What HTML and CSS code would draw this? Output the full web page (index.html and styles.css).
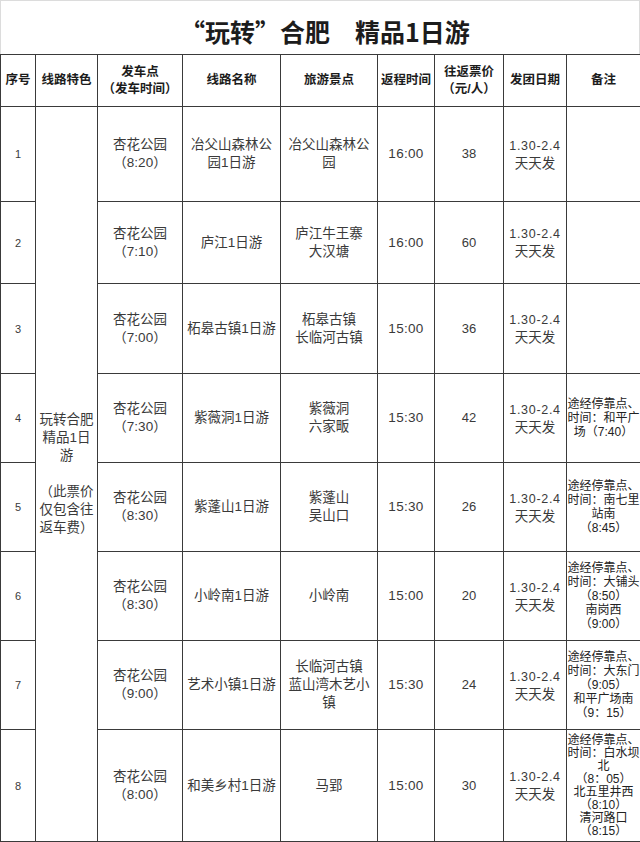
FILE: index.html
```html
<!DOCTYPE html>
<html lang="zh-CN">
<head>
<meta charset="utf-8">
<title>“玩转”合肥 精品1日游</title>
<link rel="stylesheet" href="styles.css">
</head>
<body>
<div class="page">
  <div class="title">“玩转”合肥　精品1日游</div>
  <table class="sheet">
    <colgroup>
      <col class="c-no"><col class="c-feat"><col class="c-dep"><col class="c-name"><col class="c-spot">
      <col class="c-ret"><col class="c-price"><col class="c-date"><col class="c-note">
    </colgroup>
    <thead>
      <tr class="h-head">
        <th>序号</th>
        <th>线路特色</th>
        <th>发车点<br>（发车时间）</th>
        <th>线路名称</th>
        <th>旅游景点</th>
        <th>返程时间</th>
        <th>往返票价<br>（元/人）</th>
        <th>发团日期</th>
        <th>备注</th>
      </tr>
    </thead>
    <tbody>
      <tr class="h95">
        <td class="no">1</td>
        <td class="feat" rowspan="8">玩转合肥<br>精品1日<br>游<br><br>（此票价<br>仅包含往<br>返车费）</td>
        <td>杏花公园<br>（8:20）</td>
        <td>冶父山森林公<br>园1日游</td>
        <td>冶父山森林公<br>园</td>
        <td class="time">16:00</td>
        <td class="price">38</td>
        <td class="date"><span class="range">1.30-2.4</span><br>天天发</td>
        <td class="note"></td>
      </tr>
      <tr class="h82">
        <td class="no">2</td>
        <td>杏花公园<br>（7:10）</td>
        <td>庐江1日游</td>
        <td>庐江牛王寨<br>大汉塘</td>
        <td class="time">16:00</td>
        <td class="price">60</td>
        <td class="date"><span class="range">1.30-2.4</span><br>天天发</td>
        <td class="note"></td>
      </tr>
      <tr class="h90">
        <td class="no">3</td>
        <td>杏花公园<br>（7:00）</td>
        <td>柘皋古镇1日游</td>
        <td>柘皋古镇<br>长临河古镇</td>
        <td class="time">15:00</td>
        <td class="price">36</td>
        <td class="date"><span class="range">1.30-2.4</span><br>天天发</td>
        <td class="note"></td>
      </tr>
      <tr class="h89">
        <td class="no">4</td>
        <td>杏花公园<br>（7:30）</td>
        <td>紫薇洞1日游</td>
        <td>紫薇洞<br>六家畈</td>
        <td class="time">15:30</td>
        <td class="price">42</td>
        <td class="date"><span class="range">1.30-2.4</span><br>天天发</td>
        <td class="note">途经停靠点、<br>时间：和平广<br>场（7:40）</td>
      </tr>
      <tr class="h89">
        <td class="no">5</td>
        <td>杏花公园<br>（8:30）</td>
        <td>紫蓬山1日游</td>
        <td>紫蓬山<br>吴山口</td>
        <td class="time">15:30</td>
        <td class="price">26</td>
        <td class="date"><span class="range">1.30-2.4</span><br>天天发</td>
        <td class="note">途经停靠点、<br>时间：南七里<br>站南<br>（8:45）</td>
      </tr>
      <tr class="h89">
        <td class="no">6</td>
        <td>杏花公园<br>（8:30）</td>
        <td>小岭南1日游</td>
        <td>小岭南</td>
        <td class="time">15:00</td>
        <td class="price">20</td>
        <td class="date"><span class="range">1.30-2.4</span><br>天天发</td>
        <td class="note">途经停靠点、<br>时间：大铺头<br>（8:50）<br>南岗西<br>（9:00）</td>
      </tr>
      <tr class="h89">
        <td class="no">7</td>
        <td>杏花公园<br>（9:00）</td>
        <td>艺术小镇1日游</td>
        <td>长临河古镇<br>蓝山湾木艺小<br>镇</td>
        <td class="time">15:30</td>
        <td class="price">24</td>
        <td class="date"><span class="range">1.30-2.4</span><br>天天发</td>
        <td class="note">途经停靠点、<br>时间：大东门<br>（9:05）<br>和平广场南<br>（9：15）</td>
      </tr>
      <tr class="h112">
        <td class="no">8</td>
        <td>杏花公园<br>（8:00）</td>
        <td>和美乡村1日游</td>
        <td>马郢</td>
        <td class="time">15:00</td>
        <td class="price">30</td>
        <td class="date"><span class="range">1.30-2.4</span><br>天天发</td>
        <td class="note tight">途经停靠点、<br>时间：白水坝<br>北<br>（8：05）<br>北五里井西<br>（8:10）<br>清河路口<br>（8:15）</td>
      </tr>
    </tbody>
  </table>
</div>
</body>
</html>
```
FILE: styles.css
```css
* { box-sizing: border-box; }
html, body { margin: 0; padding: 0; background: #fff; }
body {
  font-family: "Liberation Sans", "Noto Sans CJK SC", sans-serif;
  color: #333;
}
.page { width: 640px; }
.title {
  height: 54px;
  border: 1px solid #dcdcdc;
  border-bottom: none;
  display: flex;
  justify-content: center;
  align-items: center;
  padding: 6px 0 0 10px;
  font-family: "Noto Sans CJK SC", sans-serif;
  font-weight: 700;
  font-size: 25px;
  color: #1c1c1c;
}
.sheet {
  width: 640px;
  border-collapse: collapse;
  table-layout: fixed;
}
.c-no { width: 35px; }
.c-feat { width: 62px; }
.c-dep { width: 85px; }
.c-name { width: 98px; }
.c-spot { width: 97px; }
.c-ret { width: 57px; }
.c-price { width: 69px; }
.c-date { width: 63px; }
.c-note { width: 74px; }

.sheet th, .sheet td {
  border: 1px solid #3a3a3a;
  padding: 0 3px;
  text-align: center;
  vertical-align: middle;
}
.sheet th {
  padding: 0;
  font-family: "Liberation Sans", "Noto Sans CJK SC", sans-serif;
  font-weight: 700;
  font-size: 12.5px;
  line-height: 17px;
  color: #1c1c1c;
  white-space: nowrap;
}
.sheet td {
  font-size: 13.5px;
  line-height: 18px;
  color: #3a3a3a;
}
.h-head { height: 52px; }
.h95 { height: 95px; }
.h82 { height: 82px; }
.h90 { height: 90px; }
.h89 { height: 89px; }
.h112 { height: 112px; }

.sheet td.no { font-size: 11px; }
.sheet td.time { font-size: 13.5px; letter-spacing: 0.3px; }
.sheet td.price { font-size: 13px; }
.sheet td.date { line-height: 17px; }
.range { font-size: 12.5px; letter-spacing: 0.7px; }
.sheet td.note {
  padding: 0;
  font-size: 12px;
  line-height: 14px;
  color: #222;
}
.sheet td.note.tight { line-height: 13px; }
```
